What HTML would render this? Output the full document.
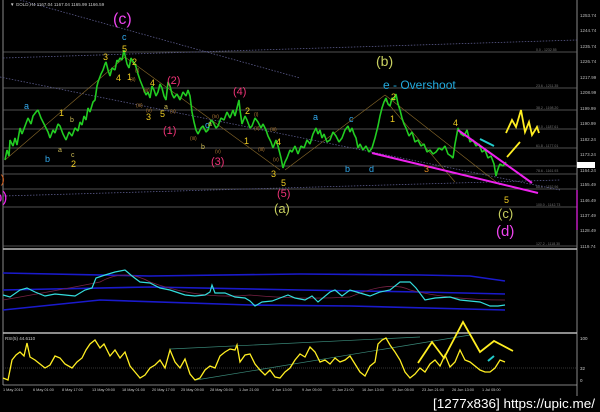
<!DOCTYPE html>
<html><head><meta charset="utf-8"><style>
html,body{margin:0;padding:0;background:#000;width:600px;height:412px;overflow:hidden}
svg{display:block}
text{font-family:"Liberation Sans",sans-serif}
</style></head><body>
<svg width="600" height="412" viewBox="0 0 600 412" xmlns="http://www.w3.org/2000/svg">
<rect width="600" height="412" fill="#000"/>
<line x1="3" y1="0" x2="3" y2="385" stroke="#aaa" stroke-width="0.8"/>
<line x1="577" y1="0" x2="577" y2="396" stroke="#aaa" stroke-width="0.8"/>
<line x1="3" y1="249" x2="577" y2="249" stroke="#bbb" stroke-width="1.5"/>
<line x1="3" y1="333" x2="577" y2="333" stroke="#bbb" stroke-width="1.5"/>
<line x1="3" y1="385" x2="577" y2="385" stroke="#aaa" stroke-width="0.8"/>
<g stroke="#6a6a6a" stroke-width="0.7">
<line x1="3" y1="52" x2="577" y2="52"/><line x1="3" y1="88" x2="577" y2="88"/>
<line x1="3" y1="110" x2="577" y2="110"/><line x1="3" y1="129" x2="577" y2="129"/>
<line x1="3" y1="148" x2="577" y2="148"/><line x1="3" y1="166" x2="577" y2="166"/>
<line x1="3" y1="174" x2="577" y2="174"/><line x1="3" y1="189" x2="577" y2="189"/>
<line x1="3" y1="207" x2="577" y2="207"/><line x1="3" y1="246" x2="577" y2="246"/>
</g>
<g fill="#777" font-size="3.5">
<text x="536" y="51">0.0 - 1232.55</text><text x="536" y="87">23.6 - 1211.35</text>
<text x="536" y="109">38.2 - 1198.20</text><text x="536" y="128">50.0 - 1187.61</text>
<text x="536" y="147">61.8 - 1177.01</text><text x="536" y="172">78.6 - 1161.93</text>
<text x="536" y="188">88.6 - 1152.96</text><text x="536" y="206">100.0 - 1142.73</text>
<text x="536" y="245">127.2 - 1118.30</text>
</g>
<g stroke="#5a5a8a" stroke-width="0.8" stroke-dasharray="1.5,1.5" fill="none">
<line x1="20" y1="0" x2="300" y2="78"/>
<line x1="0" y1="77" x2="560" y2="190"/>
<line x1="3" y1="58" x2="577" y2="40"/>
<line x1="3" y1="196" x2="560" y2="180"/>
</g>
<g stroke="#8a6a2a" stroke-width="0.6" fill="none">
<line x1="5" y1="160" x2="125" y2="57"/><line x1="125" y1="57" x2="280" y2="170"/>
<line x1="285" y1="170" x2="385" y2="95"/><line x1="385" y1="95" x2="500" y2="185"/>
<line x1="385" y1="100" x2="455" y2="182"/>
</g>
<polyline fill="none" stroke="#22cc22" stroke-width="1.6" stroke-linejoin="bevel" points="5,160 7,150 9,156 10,140 13,146 15,138 17,145 20,128 22,134 25,126 28,118 31,124 33,116 36,112 38,110 41,118 45,126 48,132 50,138 53,130 55,133 58,124 60,126 63,134 66,140 69,132 72,136 75,128 78,131 80,122 82,125 84,116 86,120 88,108 90,112 93,102 95,100 97,86 98,82 101,74 103,70 105,64 106,62 108,70 110,76 112,68 115,70 117,60 118,62 120,58 122,60 124,50 125,55 127,64 129,68 131,58 132,60 135,64 137,70 138,74 140,80 142,85 144,90 146,95 148,92 150,98 152,86 154,90 156,96 158,92 160,84 162,88 164,96 166,100 168,82 170,86 172,94 174,98 177,94 180,100 183,92 186,96 188,90 190,96 192,112 194,122 196,130 198,134 201,128 203,126 206,132 208,130 211,120 213,122 216,128 218,126 221,118 224,120 227,112 230,118 233,110 235,116 237,108 239,100 240,110 242,124 245,116 247,120 250,128 252,126 255,118 258,122 261,128 263,124 266,130 268,136 271,142 273,148 276,140 278,146 281,158 283,168 285,162 287,158 290,150 292,152 295,146 298,154 301,146 304,148 307,140 310,144 313,134 316,128 318,134 320,130 322,138 324,134 327,142 330,140 333,132 336,136 339,142 342,138 345,130 348,126 350,132 352,128 354,134 356,138 358,148 360,144 363,150 366,146 369,152 372,148 375,138 378,126 380,116 382,108 384,102 386,98 388,104 390,106 392,98 394,100 396,94 398,104 400,110 402,118 404,124 406,128 409,136 412,132 415,142 418,140 421,146 424,144 427,152 430,150 433,154 436,152 439,148 442,150 445,146 448,154 451,156 453,158 455,144 458,128 461,134 464,136 467,130 470,142 473,140 476,146 479,144 482,152 485,150 488,158 491,156 494,164 496,176 497,172 499,166 500,164 503,166 506,162"/>
<g stroke="#ee22ee" stroke-width="2" fill="none">
<line x1="372" y1="153" x2="538" y2="193"/>
<line x1="458" y1="130" x2="532" y2="183"/>
</g>
<polyline fill="none" stroke="#ffee22" stroke-width="1.8" points="506,133 512,120 516,127 521,110 525,132 529,122 532,135 537,127 539,133"/>
<line x1="520" y1="142" x2="507" y2="157" stroke="#ffee22" stroke-width="1.8"/>
<line x1="480" y1="139" x2="494" y2="146" stroke="#22cccc" stroke-width="2"/>
<g font-size="11">
<text x="113" y="24" fill="#ee44ee" font-size="16">(c)</text>
<text x="376" y="66" fill="#c8d060" font-size="14">(b)</text>
<text x="383" y="89" fill="#22aadd" font-size="12">e - Overshoot</text>
<text x="274" y="213" fill="#c8d060" font-size="13">(a)</text>
<text x="498" y="218" fill="#c8d060" font-size="13">(c)</text>
<text x="496" y="236" fill="#ee44ee" font-size="15">(d)</text>
<text x="-6" y="183" fill="#dd6622" font-size="12">e)</text>
<text x="-6" y="202" fill="#ee22ee" font-size="15">b)</text>
<text x="163" y="134" fill="#ee3377" font-size="11">(1)</text>
<text x="167" y="84" fill="#ee3377" font-size="11">(2)</text>
<text x="211" y="165" fill="#ee3377" font-size="11">(3)</text>
<text x="233" y="95" fill="#ee3377" font-size="11">(4)</text>
<text x="277" y="197" fill="#ee3377" font-size="11">(5)</text>
</g>
<g font-size="9" fill="#eecc22">
<text x="103" y="60">3</text><text x="122" y="52">5</text><text x="132" y="65">2</text>
<text x="116" y="81">4</text><text x="127" y="80">1</text><text x="146" y="120">3</text>
<text x="160" y="117">5</text><text x="150" y="86">4</text><text x="59" y="116">1</text>
<text x="71" y="167">2</text><text x="245" y="114">2</text><text x="244" y="144">1</text>
<text x="276" y="145">4</text><text x="271" y="177">3</text><text x="281" y="186">5</text>
<text x="391" y="100">2</text><text x="390" y="122">1</text><text x="453" y="126">4</text>
<text x="504" y="203">5</text><text x="424" y="172" fill="#dd8822">3</text>
</g>
<g font-size="9" fill="#33aaee">
<text x="24" y="109">a</text><text x="45" y="162">b</text><text x="122" y="40">c</text>
<text x="313" y="120">a</text><text x="345" y="172">b</text><text x="349" y="122">c</text>
<text x="369" y="172">d</text><text x="205" y="128">c</text>
</g>
<g font-size="7" fill="#ccbb55">
<text x="58" y="152">a</text><text x="71" y="157">c</text><text x="70" y="122">b</text>
<text x="164" y="109">a</text><text x="201" y="149">b</text><text x="208" y="126">a</text>
</g>
<g font-size="5" fill="#aa7733">
<text x="135" y="72">(i)</text><text x="130" y="81">(ii)</text><text x="143" y="92">(iii)</text>
<text x="136" y="107">(iii)</text><text x="146" y="112">(v)</text><text x="170" y="113">(v)</text>
<text x="190" y="140">(iii)</text><text x="212" y="118">(iv)</text><text x="215" y="153">(v)</text>
<text x="254" y="116">(i)</text><text x="270" y="131">(iii)</text><text x="254" y="130">(ii)</text>
<text x="258" y="151">(iii)</text><text x="273" y="161">(v)</text>
</g>
<g fill="#bbb" font-size="4.5">
<text x="580" y="17">1253.74</text><text x="580" y="32">1244.74</text><text x="580" y="48">1235.74</text>
<text x="580" y="63">1226.74</text><text x="580" y="79">1217.99</text><text x="580" y="94">1208.99</text>
<text x="580" y="110">1199.99</text><text x="580" y="125">1190.99</text><text x="580" y="141">1182.24</text>
<text x="580" y="156">1173.24</text><text x="580" y="172">1164.24</text><text x="580" y="186">1155.49</text>
<text x="580" y="202">1146.49</text><text x="580" y="217">1137.49</text><text x="580" y="232">1128.49</text>
<text x="580" y="248">1119.74</text>
</g>
<rect x="577" y="162" width="18" height="6" fill="#fff"/>
<line x1="577" y1="190" x2="577" y2="230" stroke="#ee22ee" stroke-width="1.2"/>
<text x="10" y="6" fill="#ccc" font-size="4.5">▼ GOLD,H4  1167.04 1167.04 1165.99 1166.59</text>
<g fill="none" stroke-width="1.6" stroke="#1a1acc">
<path d="M3,273 L150,276 L300,274 L420,275 L470,276 L505,281"/>
<path d="M3,290 L150,287 L300,290 L420,292 L505,294"/>
<path d="M3,310 L100,300 L250,305 L350,306 L505,310"/>
</g>
<path d="M3,300 Q60,290 100,282 Q125,268 150,282 Q200,300 250,295 Q300,300 350,297 Q390,280 410,290 Q450,300 505,300" fill="none" stroke="#772244" stroke-width="0.8"/>
<polyline fill="none" stroke="#33dddd" stroke-width="1.2" points="3,295 10,297 20,290 27,288 35,292 45,296 55,294 65,295 75,296 85,290 92,288 96,278 105,275 115,272 125,270 132,276 140,282 150,283 160,288 170,290 185,295 195,296 205,295 210,292 212,285 215,293 225,293 235,297 245,298 250,301 255,306 262,302 272,301 280,298 288,295 295,298 305,300 312,296 318,302 330,292 335,290 342,296 350,290 360,293 370,296 380,292 390,290 400,282 410,282 416,288 425,300 435,298 450,297 460,300 470,301 480,302 490,306 498,306 505,305"/>
<text x="5" y="340" fill="#ccc" font-size="4.5">RSI(5) 44.6110</text>
<line x1="3" y1="368" x2="577" y2="368" stroke="#666" stroke-width="0.6" stroke-dasharray="1,1"/>
<g fill="#ccc" font-size="4.5"><text x="580" y="340">100</text><text x="580" y="370">32</text><text x="580" y="382">0</text></g>
<g stroke="#3a8a7a" stroke-width="0.7"><line x1="170" y1="349" x2="420" y2="337"/><line x1="196" y1="380" x2="470" y2="335"/></g>
<polyline fill="none" stroke="#ffee22" stroke-width="1.3" points="3,378 8,380 12,360 16,355 20,352 24,356 27,343 30,357 35,360 40,364 45,368 50,365 55,356 60,358 65,364 72,368 77,362 82,358 86,350 90,344 95,340 100,348 104,344 110,356 115,350 120,358 125,352 130,366 135,372 140,378 145,375 150,368 155,365 160,360 165,368 170,350 175,362 180,368 185,359 190,374 195,380 200,378 205,370 210,366 215,368 220,356 225,352 230,349 235,350 237,345 240,362 245,355 250,354 255,364 260,370 265,375 270,370 275,377 280,378 285,372 290,368 295,360 300,354 305,357 310,347 315,352 320,362 325,360 330,364 335,358 340,362 345,360 350,356 355,364 360,372 365,376 370,366 375,362 378,344 382,340 386,338 390,345 395,352 400,360 405,372 410,378 415,374 420,368 425,372 430,364 435,360 440,366 445,355 450,367 455,362 460,350 465,360 470,362 475,366 480,370 485,372 490,372 495,368 500,360 505,362"/>
<polyline fill="none" stroke="#ffee22" stroke-width="1.8" points="418,363 432,342 444,358 463,322 480,352 494,341 513,351"/>
<line x1="488" y1="361" x2="494" y2="356" stroke="#22cccc" stroke-width="2"/>
<g fill="#ccc" font-size="3.8">
<text x="3" y="391">1 May 2015</text><text x="33" y="391">6 May 01:00</text><text x="62" y="391">8 May 17:00</text>
<text x="92" y="391">13 May 09:00</text><text x="122" y="391">18 May 01:00</text><text x="152" y="391">20 May 17:00</text>
<text x="181" y="391">25 May 09:00</text><text x="210" y="391">28 May 05:00</text><text x="239" y="391">1 Jun 21:00</text>
<text x="272" y="391">4 Jun 13:00</text><text x="302" y="391">9 Jun 05:00</text><text x="332" y="391">11 Jun 21:00</text>
<text x="362" y="391">16 Jun 13:00</text><text x="392" y="391">19 Jun 05:00</text><text x="422" y="391">23 Jun 21:00</text>
<text x="452" y="391">26 Jun 13:00</text><text x="482" y="391">1 Jul 05:00</text>
</g>
<text x="433" y="408" fill="#fff" font-size="13" textLength="162" lengthAdjust="spacingAndGlyphs" font-family="Liberation Sans Narrow, Liberation Sans, sans-serif">[1277x836] https://upic.me/</text>
</svg>
</body></html>
